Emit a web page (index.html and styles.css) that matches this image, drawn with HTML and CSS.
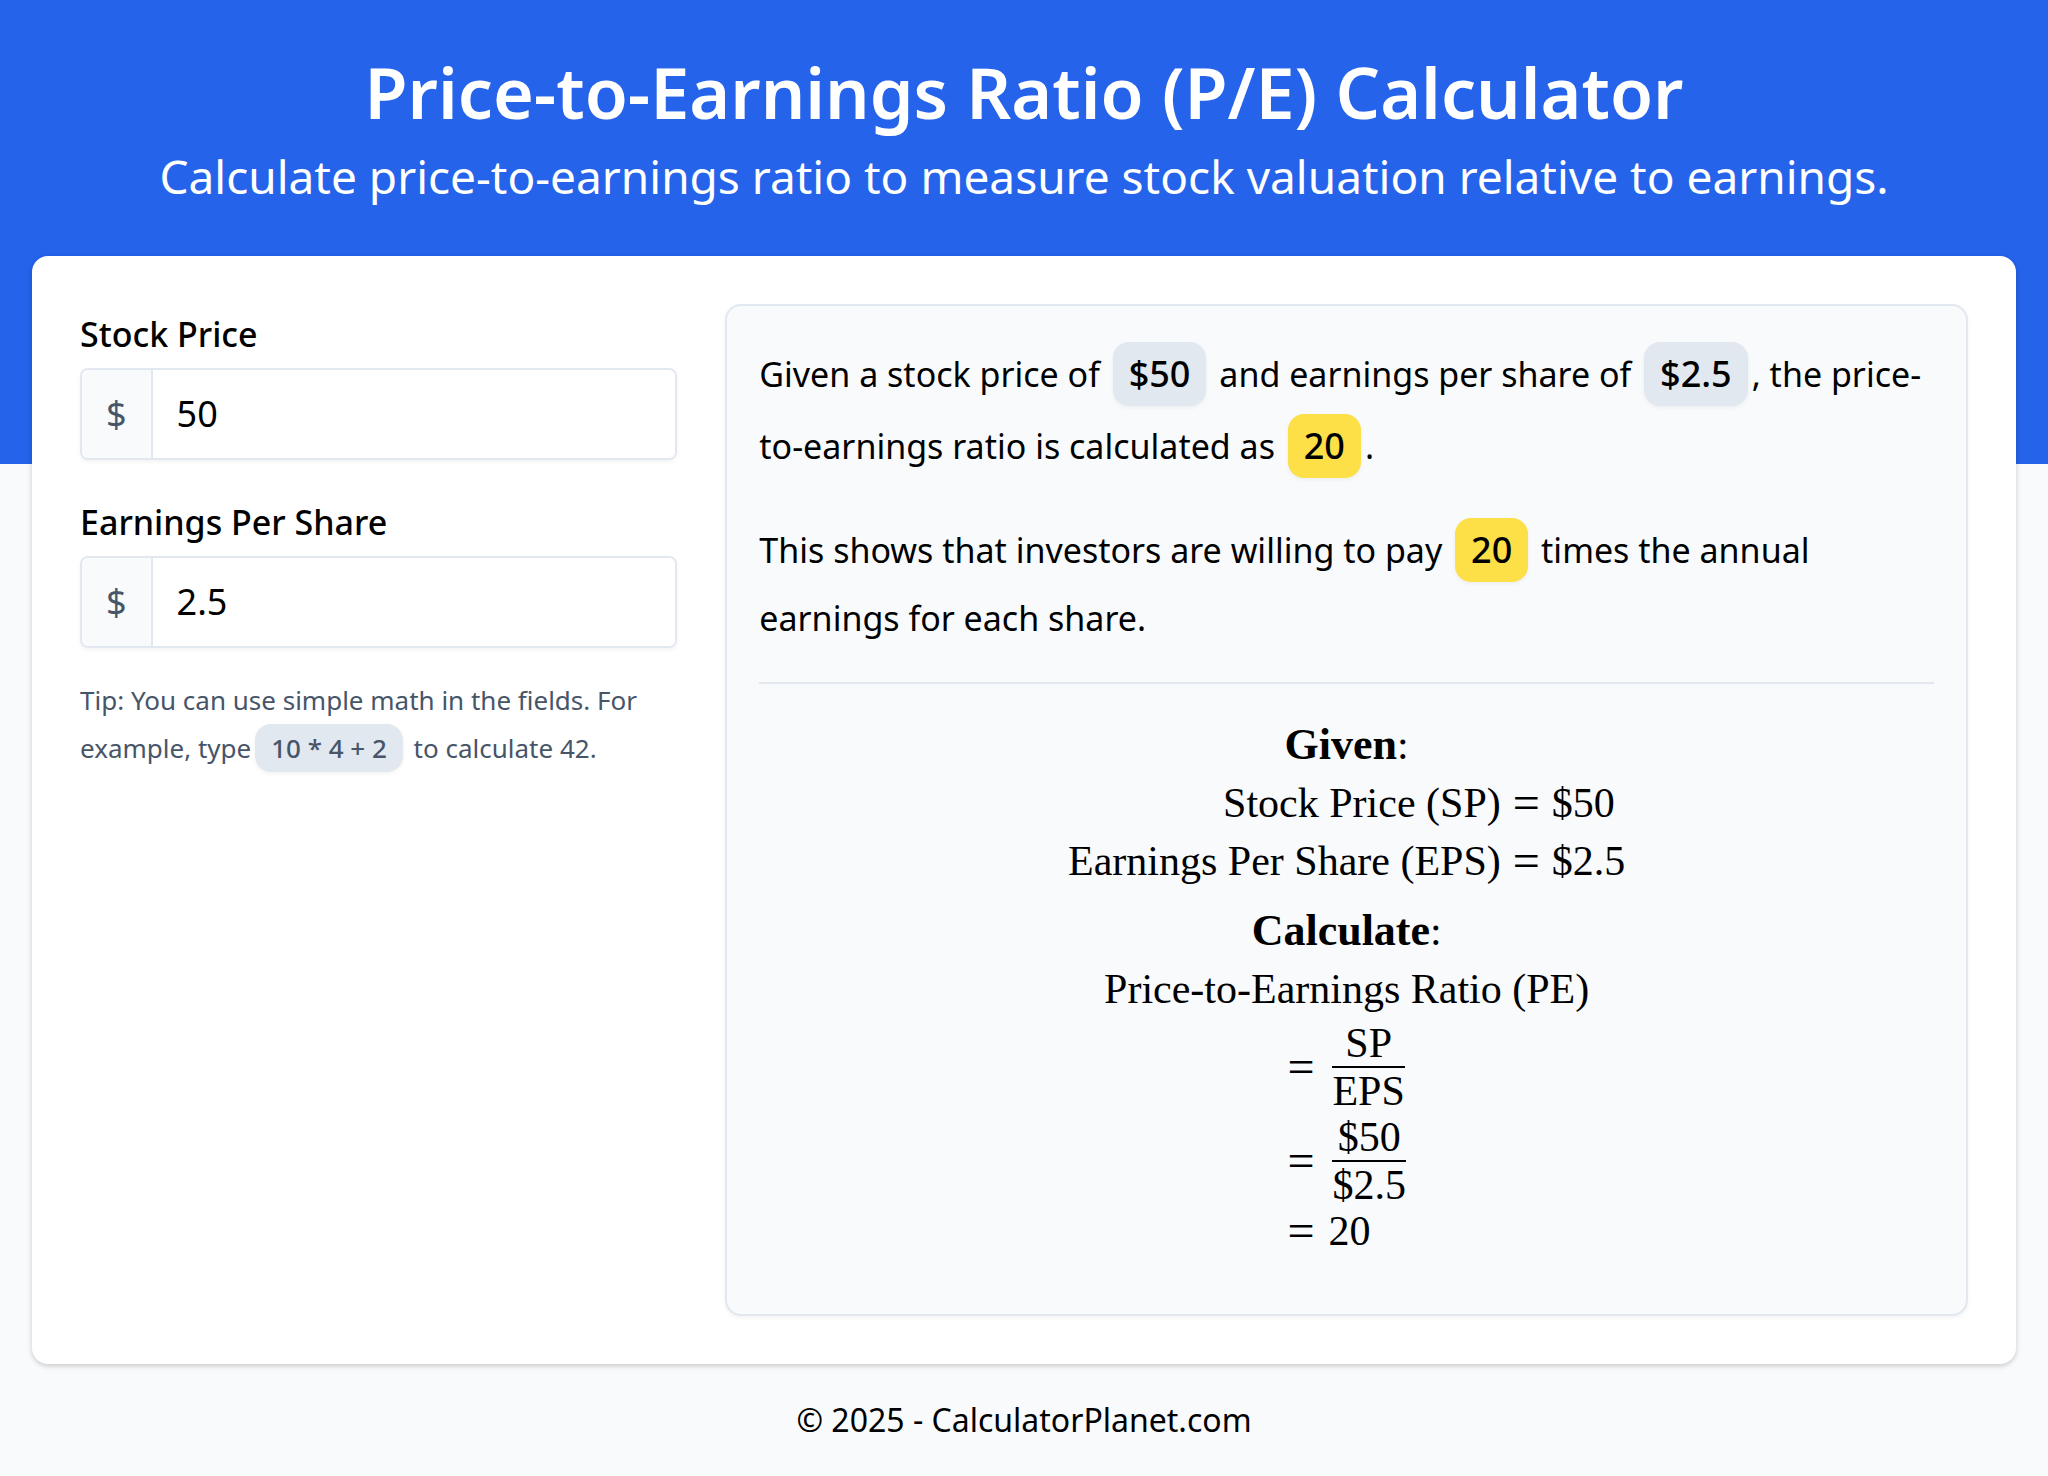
FILE: index.html
```html
<!DOCTYPE html>
<html lang="en">
<head>
<meta charset="UTF-8">
<meta name="viewport" content="width=device-width, initial-scale=1.0">
<title>Price-to-Earnings Ratio (P/E) Calculator</title>
<link rel="stylesheet" href="styles.css">
</head>
<body>

<header class="hero">
    <h1>Price-to-Earnings Ratio (P/E) Calculator</h1>
    <p>Calculate price-to-earnings ratio to measure stock valuation relative to earnings.</p>
</header>

<main class="card">
    <!-- Inputs -->
    <form class="fields">
        <div class="field">
            <label for="stock-price">Stock Price</label>
            <div class="input-group">
                <span class="prefix">$</span>
                <input type="text" id="stock-price" inputmode="decimal" value="50">
            </div>
        </div>
        <div class="field">
            <label for="eps">Earnings Per Share</label>
            <div class="input-group">
                <span class="prefix">$</span>
                <input type="text" id="eps" inputmode="decimal" value="2.5">
            </div>
        </div>
        <p class="tip">Tip: You can use simple math in the fields. For example, type<span class="pill small">10 * 4 + 2</span> to calculate 42.</p>
    </form>

    <!-- Result -->
    <section class="result">
        <p>Given a stock price of <span class="pill">$50</span> and earnings per share of <span class="pill">$2.5</span>, the price-to-earnings ratio is calculated as <span class="pill answer">20</span>.</p>
        <p>This shows that investors are willing to pay <span class="pill answer">20</span> times the annual earnings for each share.</p>
        <hr>
        <div class="math">
            <div class="line"><b>Given</b>:</div>
            <div class="given">
                <span>Stock Price (SP)</span><span class="eq">=</span><span>$50</span>
                <span>Earnings Per Share (EPS)</span><span class="eq">=</span><span>$2.5</span>
            </div>
            <div class="line calc"><b>Calculate</b>:</div>
            <div class="line">Price-to-Earnings Ratio (PE)</div>
            <div class="steps">
                <div class="step"><span class="eq">=</span><span class="frac"><span>SP</span><span>EPS</span></span></div>
                <div class="step"><span class="eq">=</span><span class="frac"><span>$50</span><span>$2.5</span></span></div>
                <div class="step"><span class="eq">=</span><span>20</span></div>
            </div>
        </div>
    </section>
</main>

<footer>© 2025 - CalculatorPlanet.com</footer>

</body>
</html>
```
FILE: styles.css
```css
* {
    box-sizing: border-box;
}
body {
    margin: 0;
    font-family: 'Noto Sans', 'Open Sans', sans-serif;
    font-size: 34px;
    line-height: 64px;
    color: #000;
    background: #f8fafc;
}

/* Header */
.hero {
    padding: 52px 32px 256px;
    background: #2563eb;
    color: #fff;
    text-align: center;
}
.hero h1 {
    margin: 0;
    font-size: 70px;
    font-weight: 600;
    line-height: 80px;
}
.hero p {
    margin: 12px 0 0;
    font-size: 46px;
}

/* Card */
.card {
    display: grid;
    grid-template-columns: repeat(3, minmax(0, 1fr));
    gap: 48px;
    margin: -208px 32px 0;
    padding: 48px;
    background: #fff;
    border-radius: 16px;
    box-shadow: 0 2px 6px rgba(0,0,0,0.1), 0 2px 4px rgba(0,0,0,0.1);
}

/* Inputs */
.field {
    margin-bottom: 32px;
}
.field label {
    display: block;
    margin-bottom: 4px;
    font-weight: 500;
    line-height: 60px;
}
.input-group {
    display: flex;
    height: 92px;
    border: 2px solid #e2e8f0;
    border-radius: 8px;
    overflow: hidden;
    font-size: 36px;
    box-shadow: 0 2px 4px rgba(0,0,0,0.05);
}
.prefix {
    display: flex;
    align-items: center;
    padding: 0 24px;
    background: #f8fafc;
    border-right: 2px solid #e2e8f0;
    color: #475569;
}
.input-group input {
    flex: 1;
    min-width: 0;
    padding: 0 24px;
    border: 0;
    outline: 0;
    font: inherit;
    color: #000;
}
.tip {
    margin: -4px 0 0;
    font-size: 26px;
    line-height: 48px;
    color: #475569;
}

/* Highlighted values */
.pill {
    display: inline-block;
    margin: 4px;
    padding: 0 16px;
    font-size: 36px;
    font-weight: 500;
    background: #e2e8f0;
    border-radius: 16px;
    box-shadow: 0 2px 4px rgba(0,0,0,0.05);
}
.pill.answer {
    background: #fde047;
}
.pill.small {
    margin: 0 4px;
    font-size: 26px;
}

/* Result */
.result {
    grid-column: span 2;
    padding: 32px;
    background: #f8fafc;
    border: 2px solid #e2e8f0;
    border-radius: 16px;
    box-shadow: 0 2px 4px rgba(0,0,0,0.05);
}
.result p {
    margin: 0 0 32px;
}
.result hr {
    margin: 0 0 32px;
    border: 0;
    border-top: 2px solid #e2e8f0;
}

/* Worked equations */
.math {
    display: flex;
    flex-direction: column;
    align-items: center;
    margin-bottom: 28px;
    font-family: 'Liberation Serif', serif;
    font-size: 42px;
    line-height: 58px;
}
.math b {
    font-size: 44px;
}
.given {
    display: grid;
    grid-template-columns: auto auto auto;
    column-gap: 12px;
}
.given span:nth-child(3n+1) {
    text-align: right;
}
.eq {
    font-size: 48px;
}
.calc {
    margin-top: 12px;
}
.steps {
    margin-top: 2px;
}
.step {
    display: flex;
    align-items: center;
    gap: 14px;
    line-height: 46px;
}
.frac {
    display: flex;
    flex-direction: column;
    margin-left: 4px;
    text-align: center;
}
.frac span:first-child {
    border-bottom: 2px solid #000;
}

footer {
    padding: 24px;
    font-size: 32px;
    text-align: center;
}
```
